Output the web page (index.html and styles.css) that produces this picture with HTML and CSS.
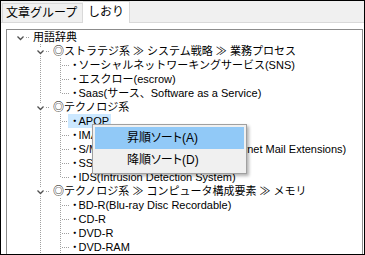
FILE: index.html
```html
<!DOCTYPE html>
<html lang="ja">
<head>
    <meta charset="UTF-8">
    <title>しおり</title>
    <link rel="stylesheet" href="styles.css">
</head>
<body>
    <div class="window">
        <div class="tabs">
            <div class="tab">文章グループ</div>
            <div class="tab active">しおり</div>
        </div>

        <div class="page">
            <div class="tree">
                <div class="row">
                    <span class="g open"><svg width="9" height="14" viewBox="0 0 9 14"><path d="M1.5 6.5 L4.5 9.5 L7.5 6.5" /></svg></span>
                    <span class="label">用語辞典</span>
                </div>
                <div class="row">
                    <span class="g"></span>
                    <span class="g open v"><svg width="9" height="14" viewBox="0 0 9 14"><rect x="0" y="3" width="9" height="9" /><path d="M1.5 6.5 L4.5 9.5 L7.5 6.5" /></svg></span>
                    <span class="label">◎ストラテジ系 ≫ システム戦略 ≫ 業務プロセス</span>
                </div>
                <div class="row">
                    <span class="g"></span><span class="g v"></span><span class="g t"></span>
                    <span class="label leaf"><span class="dot">・</span>ソーシャルネットワーキングサービス(SNS)</span>
                </div>
                <div class="row">
                    <span class="g"></span><span class="g v"></span><span class="g t"></span>
                    <span class="label leaf"><span class="dot">・</span>エスクロー(escrow)</span>
                </div>
                <div class="row">
                    <span class="g"></span><span class="g v"></span><span class="g l"></span>
                    <span class="label leaf"><span class="dot">・</span>Saas(サース、Software as a Service)</span>
                </div>
                <div class="row">
                    <span class="g"></span>
                    <span class="g open v"><svg width="9" height="14" viewBox="0 0 9 14"><rect x="0" y="3" width="9" height="9" /><path d="M1.5 6.5 L4.5 9.5 L7.5 6.5" /></svg></span>
                    <span class="label">◎テクノロジ系</span>
                </div>
                <div class="row">
                    <span class="g"></span><span class="g v"></span><span class="g t"></span>
                    <span class="label leaf selected"><span class="dot">・</span>APOP</span>
                </div>
                <div class="row">
                    <span class="g"></span><span class="g v"></span><span class="g t"></span>
                    <span class="label leaf"><span class="dot">・</span>IMAP4</span>
                </div>
                <div class="row">
                    <span class="g"></span><span class="g v"></span><span class="g t"></span>
                    <span class="label leaf"><span class="dot">・</span>S/MIME(Secure/Multipurpose Internet Mail Extensions)</span>
                </div>
                <div class="row">
                    <span class="g"></span><span class="g v"></span><span class="g t"></span>
                    <span class="label leaf"><span class="dot">・</span>SSL/TLS</span>
                </div>
                <div class="row">
                    <span class="g"></span><span class="g v"></span><span class="g l"></span>
                    <span class="label leaf"><span class="dot">・</span>IDS(Intrusion Detection System)</span>
                </div>
                <div class="row">
                    <span class="g"></span>
                    <span class="g open v"><svg width="9" height="14" viewBox="0 0 9 14"><rect x="0" y="3" width="9" height="9" /><path d="M1.5 6.5 L4.5 9.5 L7.5 6.5" /></svg></span>
                    <span class="label">◎テクノロジ系 ≫ コンピュータ構成要素 ≫ メモリ</span>
                </div>
                <div class="row">
                    <span class="g"></span><span class="g v"></span><span class="g t"></span>
                    <span class="label leaf"><span class="dot">・</span>BD-R(Blu-ray Disc Recordable)</span>
                </div>
                <div class="row">
                    <span class="g"></span><span class="g v"></span><span class="g t"></span>
                    <span class="label leaf"><span class="dot">・</span>CD-R</span>
                </div>
                <div class="row">
                    <span class="g"></span><span class="g v"></span><span class="g t"></span>
                    <span class="label leaf"><span class="dot">・</span>DVD-R</span>
                </div>
                <div class="row">
                    <span class="g"></span><span class="g v"></span><span class="g t"></span>
                    <span class="label leaf"><span class="dot">・</span>DVD-RAM</span>
                </div>
            </div>
        </div>

        <!-- context menu opened on the selected node -->
        <div class="menu">
            <div class="menu-item hot">昇順ソート(A)</div>
            <div class="menu-item">降順ソート(D)</div>
        </div>
    </div>
</body>
</html>
```

FILE: styles.css
```css
body {
    margin: 0;
    font-family: "Liberation Sans", "Noto Sans CJK JP", sans-serif;
    font-size: 12px;
    color: #000;
}

.window {
    position: relative;
    width: 365px;
    height: 255px;
    box-sizing: border-box;
    border: 1px solid #000;
    background-color: #f0f0f0;
    display: flex;
    flex-direction: column;
    overflow: hidden;
}

.tabs {
    display: flex;
    align-items: flex-end;
    height: 21px;
    padding-left: 1px;
    flex: none;
}

.tab {
    height: 18px;
    line-height: 18px;
    padding: 0 3px;
    border: 1px solid #d9d9d9;
    border-bottom: none;
    background-color: #f0f0f0;
    width: 73px;
}

.tab.active {
    position: relative;
    height: 21px;
    line-height: 20px;
    width: 38px;
    padding: 0 3px 0 5px;
    margin-bottom: -1px;
    background-color: #fff;
    border-left: none;
}

.page {
    flex: 1;
    background-color: #fff;
    border-top: 1px solid #d9d9d9;
    padding: 6px 1px 0 5px;
    overflow: hidden;
}

.tree {
    background-color: #fff;
    border: 1px solid #8c8c8c;
    border-bottom: none;
    padding-left: 3px;
    height: 300px;
    font-size: 11px;
    white-space: nowrap;
    overflow: hidden;
}

.row {
    display: flex;
    height: 14px;
    line-height: 14px;
}

/* tree guide cells, 20px per level */
.g {
    flex: none;
    width: 20px;
    height: 14px;
    background-repeat: no-repeat;
}

.g svg {
    display: block;
    margin-left: 6px;
}

.g svg path {
    fill: none;
    stroke: #505050;
    stroke-width: 1.3;
}

.g svg rect {
    fill: #fff;
}

.v {
    background-image: repeating-linear-gradient(to bottom, #a0a0a0 0 1px, transparent 1px 2px);
    background-position: 10px 0;
    background-size: 1px 100%;
}

.t {
    background-image:
        repeating-linear-gradient(to bottom, #a0a0a0 0 1px, transparent 1px 2px),
        repeating-linear-gradient(to right, #a0a0a0 0 1px, transparent 1px 2px);
    background-position: 10px 0, 12px 7px;
    background-size: 1px 100%, 8px 1px;
}

.l {
    background-image:
        repeating-linear-gradient(to bottom, #a0a0a0 0 1px, transparent 1px 2px),
        repeating-linear-gradient(to right, #a0a0a0 0 1px, transparent 1px 2px);
    background-position: 10px 0, 12px 7px;
    background-size: 1px 8px, 8px 1px;
}

.open {
    background-image: repeating-linear-gradient(to right, #a0a0a0 0 1px, transparent 1px 2px);
    background-position: 16px 7px;
    background-size: 4px 1px;
}

.open.v {
    background-image:
        repeating-linear-gradient(to bottom, #a0a0a0 0 1px, transparent 1px 2px),
        repeating-linear-gradient(to right, #a0a0a0 0 1px, transparent 1px 2px);
    background-position: 10px 0, 16px 7px;
    background-size: 1px 100%, 4px 1px;
}

.label {
    margin-left: 3px;
}

.label.leaf {
    margin-left: 2px;
}

.dot {
    font-feature-settings: "palt";
    margin-right: 1px;
}

.label.selected {
    margin-left: -2px;
    padding: 0 2px 0 4px;
    background-color: #cce8ff;
}

.menu {
    position: absolute;
    left: 91px;
    top: 123px;
    width: 155px;
    box-sizing: border-box;
    padding: 2px;
    border: 1px solid #a0a0a0;
    background-color: #f0f0f0;
    box-shadow: 2px 2px 3px rgba(0, 0, 0, 0.3);
    font-feature-settings: "palt";
}

.menu-item {
    height: 22px;
    line-height: 22px;
    padding-left: 32px;
}

.menu-item.hot {
    background-color: #91c9f7;
}
```
